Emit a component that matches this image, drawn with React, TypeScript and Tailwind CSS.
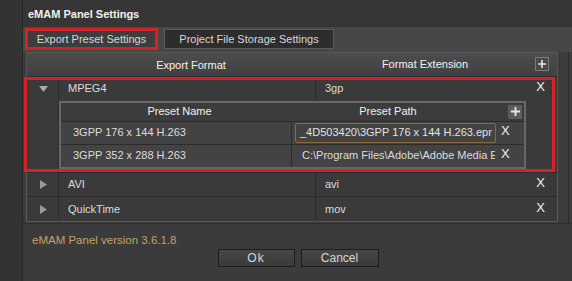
import React from "react";

interface PresetRow {
   name: string;
   path: string;
   active?: boolean;
}

const presets: PresetRow[] = [
   { name: "3GPP 176 x 144 H.263", path: "_4D503420\\3GPP 176 x 144 H.263.epr", active: true },
   { name: "3GPP 352 x 288 H.263", path: "C:\\Program Files\\Adobe\\Adobe Media Encoder\\3GPP 352 x 288 H.263.epr" },
];

function TriangleDown() {
   return (
      <svg width="9" height="6" viewBox="0 0 9 6">
         <path d="M0 0 L9 0 L4.5 6 Z" fill="#a8a8a8" />
      </svg>
   );
}

function TriangleRight() {
   return (
      <svg width="7" height="9" viewBox="0 0 7 9">
         <path d="M0 0 L7 4.5 L0 9 Z" fill="#9a9a9a" />
      </svg>
   );
}

function PlusIcon({ size = 9 }: { size?: number }) {
   return (
      <svg width={size} height={size} viewBox="0 0 10 10">
         <path d="M5 0 V10 M0 5 H10" stroke="#e6e6e6" strokeWidth="2" />
      </svg>
   );
}

function FormatRow({ name, ext }: { name: string; ext: string }) {
   return (
      <div className="flex h-[25px] border-t border-[#2c2c2c] bg-[#3a3a3a]">
         <div className="w-[32px] border-r border-[#2c2c2c] flex items-center justify-center pl-[1px]">
            <TriangleRight />
         </div>
         <div className="w-[257px] border-r border-[#2c2c2c] flex items-center pl-[9px] text-[#dcdcdc]">{name}</div>
         <div className="flex-1 flex items-center justify-between pl-[9px] pr-[12px] text-[#dcdcdc]">
            <span>{ext}</span>
            <span className="text-[13px] text-[#eeeeee] -mt-[3px]">X</span>
         </div>
      </div>
   );
}

export default function App() {
   return (
      <div
         className="w-[572px] h-[281px] overflow-hidden flex bg-[#3b3b3b] text-[11px]"
         style={{ fontFamily: '"Liberation Sans", Arial, sans-serif' }}
      >
         {/* left strip */}
         <div className="w-[23px] bg-[#333333] border-r border-[#262626]" />

         <div className="flex-1 flex flex-col">
            {/* title */}
            <div className="h-[27px] bg-[#363636] flex items-center pl-[5px] pt-[2px] font-bold text-[#f2f2f2]">
               eMAM Panel Settings
            </div>

            {/* tabs */}
            <div className="h-[25px] bg-[#474747] flex items-start pt-[1px] pl-[2px] gap-[6px]">
               <div className="w-[133px] h-[22px] border-[3px] border-[#d3222a] bg-[#3d3d3d] flex items-center justify-center text-[#d8d8d8]">
                  Export Preset Settings
               </div>
               <div className="w-[170px] h-[20px] mt-[1px] bg-[#2d2d2d] border border-[#5a5a5a] flex items-center justify-center text-[#d8d8d8]">
                  Project File Storage Settings
               </div>
            </div>

            {/* table area */}
            <div className="h-[171px] flex bg-[#3c3c3c]">
               <div className="ml-[3px] w-[532px] h-[170px] border border-[#575757] bg-[#3a3a3a] flex flex-col">
                  {/* header */}
                  <div className="h-[23px] flex bg-gradient-to-b from-[#4c4c4c] to-[#414141] text-[#f2f2f2]">
                     <div className="w-[32px]" />
                     <div className="w-[258px] flex items-center justify-center pt-[1px] pl-[6px]">Export Format</div>
                     <div className="flex-1 flex items-center justify-between pr-[8px]">
                        <span className="flex-1 text-center pr-[2px]">Format Extension</span>
                        <span className="w-[14px] h-[14px] border border-[#7a7a7a] bg-[#4a4a4a] flex items-center justify-center">
                           <PlusIcon size={8} />
                        </span>
                     </div>
                  </div>

                  {/* MPEG4 group */}
                  <div className="relative border-t border-[#2c2c2c]">
                     <div className="flex h-[24px] bg-[#3a3a3a]">
                        <div className="w-[32px] border-r border-[#2c2c2c] flex items-center justify-center pl-[1px]">
                           <TriangleDown />
                        </div>
                        <div className="w-[257px] border-r border-[#2c2c2c] flex items-center pl-[9px] text-[#dcdcdc]">MPEG4</div>
                        <div className="flex-1 flex items-center justify-between pl-[9px] pr-[12px] text-[#dcdcdc]">
                           <span>3gp</span>
                           <span className="text-[13px] text-[#eeeeee] -mt-[4px]">X</span>
                        </div>
                     </div>
                     <div className="flex h-[71px] bg-[#3a3a3a]">
                        <div className="w-[32px] border-r border-[#2c2c2c]" />
                        <div className="w-[467px] h-[68px] border-2 border-[#686868] flex flex-col bg-[#2b2b2b]">
                           <div className="h-[18px] flex bg-[#3c3c3c] text-[#f2f2f2]">
                              <div className="w-[231px] flex items-center justify-center pl-[6px]">Preset Name</div>
                              <div className="flex-1 flex items-center justify-between pr-[2px]">
                                 <span className="w-[192px] text-center">Preset Path</span>
                                 <span className="w-[14px] h-[14px] bg-[#5c5c5c] flex items-center justify-center">
                                    <PlusIcon size={9} />
                                 </span>
                              </div>
                           </div>
                           {presets.map((p) => (
                              <div key={p.name} className="h-[23px] flex border-t border-[#2b2b2b] bg-[#434343] text-[#dcdcdc]">
                                 <div className="w-[231px] border-r border-[#2b2b2b] flex items-center pl-[12px]">{p.name}</div>
                                 <div className="flex-1 flex items-center pl-[3px]">
                                    <div
                                       className={
                                          p.active
                                             ? "w-[201px] h-[20px] border-[1.5px] border-[#8a6b38] rounded-[2px] flex items-center pl-[4px] overflow-hidden whitespace-nowrap text-[#e2e2e2]"
                                             : "w-[201px] h-[20px] border-[1.5px] border-transparent flex items-center pl-[6px] overflow-hidden whitespace-nowrap text-[#dcdcdc]"
                                       }
                                    >
                                       {p.path}
                                    </div>
                                    <span className="ml-[5px] -mt-[4px] text-[13px] text-[#eeeeee]">X</span>
                                 </div>
                              </div>
                           ))}
                        </div>
                     </div>
                     {/* red highlight frame */}
                     <div className="absolute -left-[3px] top-0 right-[2px] bottom-0 border-[3px] border-[#d3222a] pointer-events-none" />
                  </div>

                  <FormatRow name="AVI" ext="avi" />
                  <FormatRow name="QuickTime" ext="mov" />
               </div>
               <div className="flex-1 flex justify-end pr-[3px]">
                  <div className="w-[1px] h-full bg-[#2a2a2a]" />
               </div>
            </div>

            {/* footer */}
            <div className="flex-1 border-t border-[#2e2e2e] bg-[#3b3b3b] flex flex-col pt-[9px]">
               <div className="pl-[9px] text-[#c4a06a] text-[11.5px] leading-[14px]">eMAM Panel version 3.6.1.8</div>
               <div className="flex justify-center gap-[6px] mt-[2px] pl-[1px]">
                  <button className="w-[77px] h-[18px] border border-[#1c1c1c] bg-gradient-to-b from-[#474747] to-[#3a3a3a] text-[#d8d8d8] text-[12px] tracking-[1px] flex items-center justify-center">
                     Ok
                  </button>
                  <button className="w-[78px] h-[18px] border border-[#1c1c1c] bg-gradient-to-b from-[#474747] to-[#3a3a3a] text-[#d8d8d8] text-[12px] flex items-center justify-center">
                     Cancel
                  </button>
               </div>
            </div>
         </div>
      </div>
   );
}
